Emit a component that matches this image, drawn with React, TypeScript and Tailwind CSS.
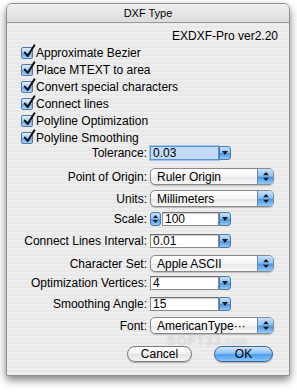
import React from "react";

const Check = () => (
  <span className="relative inline-block w-[12px] h-[12px] shrink-0 rounded-[2px] border border-[#5577a6] bg-[linear-gradient(180deg,#e2f0ff_0%,#a8d0f8_45%,#6aa9ea_55%,#a6d6fd_100%)]">
    <svg className="absolute left-[1px] top-[-4px]" width="13" height="15" viewBox="0 0 13 15">
      <path d="M1.8 8.6 L4.7 12 L11.4 1.3" fill="none" stroke="#111" strokeWidth="2.1" strokeLinecap="round" strokeLinejoin="round" />
    </svg>
  </span>
);

const CheckRow = ({ label }: { label: string }) => (
  <div className="h-[17px] flex items-center pl-[14px] gap-[3px]">
    <Check />
    <span className="text-[12px] leading-none text-black">{label}</span>
  </div>
);

const Label = ({ text }: { text: string }) => (
  <div className="w-[140px] shrink-0 text-right text-[12px] leading-none text-black">{text}</div>
);

const ComboArrow = () => (
  <div className="w-[12px] h-full shrink-0 rounded-r-[3px] border border-[#4f77a8] bg-[linear-gradient(180deg,#c6e2ff_0%,#8ec3f6_45%,#4c97e4_55%,#92cbfb_100%)] flex items-center justify-center">
    <svg width="6" height="4" viewBox="0 0 6 4"><path d="M0 0 H6 L3 4 Z" fill="#1a1a1a" /></svg>
  </div>
);

const Combo = ({ value, focused }: { value: string; focused?: boolean }) => (
  <div className="w-[81px] h-[14px] flex ml-[3px]">
    <div
      className={
        focused
          ? "flex-1 h-full border border-[#5b8fd6] shadow-[0_0_0_1px_#9cc3f2] bg-[#c3dbf7] flex items-center pl-[2px] text-[12px] leading-none"
          : "flex-1 h-full border border-[#8a8a8a] border-t-[#6f6f6f] bg-white shadow-[inset_0_1px_1px_rgba(0,0,0,0.2)] flex items-center pl-[2px] text-[12px] leading-none"
      }
    >
      {value}
    </div>
    <ComboArrow />
  </div>
);

const UpDown = () => (
  <svg width="6" height="9" viewBox="0 0 6 9">
    <path d="M0 3.3 L3 0 L6 3.3 Z" fill="#1a1a1a" />
    <path d="M0 5.7 L3 9 L6 5.7 Z" fill="#1a1a1a" />
  </svg>
);

const Popup = ({ value }: { value: string }) => (
  <div className="ml-[3px] w-[124px] h-[17px] flex rounded-[5px] border border-[#8a8a8a] bg-[linear-gradient(180deg,#ffffff_0%,#f6f6f6_50%,#e9e9e9_55%,#f8f8f8_100%)] shadow-[0_1px_1px_rgba(0,0,0,0.2)] overflow-hidden">
    <div className="flex-1 flex items-center pl-[6px] text-[12px] leading-none text-black">{value}</div>
    <div className="w-[16px] h-full border-l border-[#5f86b8] bg-[linear-gradient(180deg,#c6e2ff_0%,#8ec3f6_45%,#4c97e4_55%,#92cbfb_100%)] flex items-center justify-center">
      <UpDown />
    </div>
  </div>
);

export default function App() {
  return (
    <div className="w-[297px] h-[392px] bg-white pt-[3px] pl-[6px] font-['Liberation_Sans',Arial,sans-serif] text-black overflow-hidden">
      <div className="relative w-[284px] h-[373px] rounded-t-[6px] border border-[#8e8e8e] shadow-[0_4px_9px_rgba(0,0,0,0.5)] overflow-hidden flex flex-col bg-[repeating-linear-gradient(180deg,#eeeeee_0px,#eeeeee_2px,#e8e8e8_2px,#e8e8e8_4px)]">
        <div className="h-[19px] shrink-0 border-b border-[#9a9a9a] bg-[linear-gradient(180deg,#efefef_0%,#dcdcdc_100%)] flex items-center justify-center text-[11px] leading-none text-black">
          DXF Type
        </div>

        <div className="mt-[6px] h-[14px] flex items-center justify-end pr-[11px] text-[12px] leading-none">
          EXDXF-Pro ver2.20
        </div>

        <div className="mt-[1px] flex flex-col">
          <CheckRow label="Approximate Bezier" />
          <CheckRow label="Place MTEXT to area" />
          <CheckRow label="Convert special characters" />
          <CheckRow label="Connect lines" />
          <CheckRow label="Polyline Optimization" />
          <CheckRow label="Polyline Smoothing" />
        </div>

        <div className="flex items-center h-[14px]">
          <Label text="Tolerance:" />
          <Combo value="0.03" focused />
        </div>
        <div className="mt-[8px] flex items-center h-[17px]">
          <Label text="Point of Origin:" />
          <Popup value="Ruler Origin" />
        </div>
        <div className="mt-[5px] flex items-center h-[17px]">
          <Label text="Units:" />
          <Popup value="Millimeters" />
        </div>
        <div className="mt-[5px] flex items-center h-[14px]">
          <Label text="Scale:" />
          <div className="ml-[3px] w-[81px] h-[14px] flex">
            <div className="w-[11px] h-full shrink-0 rounded-[3px] border border-[#4f77a8] bg-[linear-gradient(180deg,#c6e2ff_0%,#8ec3f6_45%,#4c97e4_55%,#92cbfb_100%)] flex items-center justify-center">
              <svg width="5" height="8" viewBox="0 0 5 8">
                <path d="M0 3 L2.5 0 L5 3 Z" fill="#1a1a1a" />
                <path d="M0 5 L2.5 8 L5 5 Z" fill="#1a1a1a" />
              </svg>
            </div>
            <div className="ml-[1px] flex-1 h-full border border-[#8a8a8a] border-t-[#6f6f6f] bg-white shadow-[inset_0_1px_1px_rgba(0,0,0,0.2)] flex items-center pl-[2px] text-[12px] leading-none">
              100
            </div>
            <ComboArrow />
          </div>
        </div>
        <div className="mt-[8px] flex items-center h-[14px]">
          <Label text="Connect Lines Interval:" />
          <Combo value="0.01" />
        </div>
        <div className="mt-[7px] flex items-center h-[17px]">
          <Label text="Character Set:" />
          <Popup value="Apple ASCII" />
        </div>
        <div className="mt-[4px] flex items-center h-[14px]">
          <Label text="Optimization Vertices:" />
          <Combo value="4" />
        </div>
        <div className="mt-[7px] flex items-center h-[14px]">
          <Label text="Smoothing Angle:" />
          <Combo value="15" />
        </div>
        <div className="mt-[6px] flex items-center h-[17px]">
          <Label text="Font:" />
          <Popup value="AmericanType···" />
        </div>

        <div className="mt-[12px] flex h-[16px] pl-[120px] gap-[22px]">
          <button className="w-[65px] h-[16px] rounded-full border border-[#7a7a7a] bg-[linear-gradient(180deg,#ffffff_0%,#f4f4f4_45%,#e2e2e2_55%,#f6f6f6_100%)] shadow-[0_1px_1px_rgba(0,0,0,0.25)] text-[12px] leading-none text-black flex items-center justify-center">
            Cancel
          </button>
          <button className="w-[59px] h-[16px] rounded-full border border-[#3a68a4] bg-[linear-gradient(180deg,#cfe6ff_0%,#8cc3f7_45%,#4d9cec_55%,#86c6fc_100%)] shadow-[0_1px_1px_rgba(0,0,0,0.25)] text-[12px] leading-none text-black flex items-center justify-center">
            OK
          </button>
        </div>

        <div className="absolute left-[160px] top-[330px] text-[13px] leading-none font-bold tracking-[1px] text-white/60 [text-shadow:0_0_1px_rgba(0,0,0,0.25)] pointer-events-none">
          SOFT32<span className="font-normal text-[10px]">.com</span>
        </div>
      </div>
    </div>
  );
}
